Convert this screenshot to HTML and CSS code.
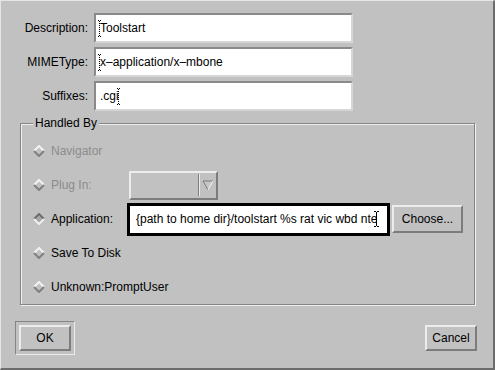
FILE: index.html
```html
<!DOCTYPE html>
<html>
<head>
<meta charset="utf-8">
<link rel="stylesheet" href="styles.css">
</head>
<body>
<div class="dialog">
  <div class="fields">
    <label class="flabel">Description:</label>
    <div class="field"><span class="caret"><svg width="3" height="17" viewBox="0 0 3 17"><path d="M1.5 1V16" stroke="#000" stroke-width="1" stroke-dasharray="1 1"/><rect x="0" y="0" width="1" height="1"/><rect x="2" y="0" width="1" height="1"/><rect x="0" y="16" width="1" height="1"/><rect x="2" y="16" width="1" height="1"/></svg></span>Toolstart</div>
    <label class="flabel">MIMEType:</label>
    <div class="field"><span class="caret"><svg width="3" height="17" viewBox="0 0 3 17"><path d="M1.5 1V16" stroke="#000" stroke-width="1" stroke-dasharray="1 1"/><rect x="0" y="0" width="1" height="1"/><rect x="2" y="0" width="1" height="1"/><rect x="0" y="16" width="1" height="1"/><rect x="2" y="16" width="1" height="1"/></svg></span>x–application/x–mbone</div>
    <label class="flabel">Suffixes:</label>
    <div class="field">.cgi<span class="caret"><svg width="3" height="17" viewBox="0 0 3 17"><path d="M1.5 1V16" stroke="#000" stroke-width="1" stroke-dasharray="1 1"/><rect x="0" y="0" width="1" height="1"/><rect x="2" y="0" width="1" height="1"/><rect x="0" y="16" width="1" height="1"/><rect x="2" y="16" width="1" height="1"/></svg></span></div>
  </div>

  <div class="group">
    <span class="legend">Handled By</span>
    <div class="row disabled">
      <svg class="diamond" width="12" height="12" viewBox="0 0 12 12"><path d="M1 6L6 1L11 6" fill="none" stroke="#f2f2f2" stroke-width="2"/><path d="M1 6L6 11L11 6" fill="none" stroke="#808080" stroke-width="2"/></svg>
      <span class="rlabel">Navigator</span>
    </div>
    <div class="row disabled">
      <svg class="diamond" width="12" height="12" viewBox="0 0 12 12"><path d="M1 6L6 1L11 6" fill="none" stroke="#f2f2f2" stroke-width="2"/><path d="M1 6L6 11L11 6" fill="none" stroke="#808080" stroke-width="2"/></svg>
      <span class="rlabel fixed">Plug In:</span>
      <div class="combo">
        <span class="combo-value"></span>
        <span class="combo-sep"></span>
        <span class="combo-arrow"><svg width="12" height="11" viewBox="0 0 12 11"><path d="M1 1H11L6 10Z" fill="#c6c6c6"/><path d="M6 10L1 1H11" fill="none" stroke="#7a7a7a" stroke-width="1"/><path d="M11 1L6 10" fill="none" stroke="#f2f2f2" stroke-width="1"/></svg></span>
      </div>
    </div>
    <div class="row">
      <svg class="diamond" width="12" height="12" viewBox="0 0 12 12"><path d="M6 1L11 6L6 11L1 6Z" fill="#a8a8a8"/><path d="M1 6L6 1L11 6" fill="none" stroke="#6e6e6e" stroke-width="2"/><path d="M1 6L6 11L11 6" fill="none" stroke="#efefef" stroke-width="2"/></svg>
      <span class="rlabel fixed">Application:</span>
      <div class="appfield">{path to home dir}/toolstart %s rat vic wbd nte<span class="icaret"><svg width="5" height="16" viewBox="0 0 5 16"><path d="M0 0.5H2M3 0.5H5M2.5 1V15M0 15.5H2M3 15.5H5" stroke="#000" stroke-width="1" fill="none"/></svg></span></div>
      <button class="btn choose">Choose...</button>
    </div>
    <div class="row">
      <svg class="diamond" width="12" height="12" viewBox="0 0 12 12"><path d="M1 6L6 1L11 6" fill="none" stroke="#f2f2f2" stroke-width="2"/><path d="M1 6L6 11L11 6" fill="none" stroke="#808080" stroke-width="2"/></svg>
      <span class="rlabel">Save To Disk</span>
    </div>
    <div class="row">
      <svg class="diamond" width="12" height="12" viewBox="0 0 12 12"><path d="M1 6L6 1L11 6" fill="none" stroke="#f2f2f2" stroke-width="2"/><path d="M1 6L6 11L11 6" fill="none" stroke="#808080" stroke-width="2"/></svg>
      <span class="rlabel">Unknown:PromptUser</span>
    </div>
  </div>

  <div class="actions">
    <div class="default-frame"><button class="btn ok">OK</button></div>
    <button class="btn cancel">Cancel</button>
  </div>
</div>
</body>
</html>
```

FILE: styles.css
```css
* { box-sizing: border-box; }
html, body { margin: 0; padding: 0; }
body {
  width: 495px;
  height: 370px;
  background: #c1c1c1;
  font-family: "Liberation Sans", Arial, sans-serif;
  font-size: 12px;
  color: #000;
}
.dialog {
  width: 495px;
  height: 370px;
  background: #c1c1c1;
  border-top: 1px solid #e6e6e6;
  border-left: 1px solid #e6e6e6;
  border-right: 2px solid #6c6c6c;
  border-bottom: 2px solid #6c6c6c;
  padding-top: 12px;
  display: flex;
  flex-direction: column;
}
.fields {
  display: grid;
  grid-template-columns: 87px 259px;
  column-gap: 6px;
  row-gap: 4px;
  align-items: center;
}
.flabel { text-align: right; }
.field {
  height: 30px;
  border: 2px solid;
  border-color: #8a8a8a #d6d6d6 #d6d6d6 #8a8a8a;
  background: #fff;
  padding-left: 4px;
  display: flex;
  align-items: center;
  white-space: pre;
}
.caret {
  display: inline-block;
  width: 0;
  height: 17px;
}
.caret svg { display: block; margin-left: -2px; }

.group {
  position: relative;
  margin: 12px 0 0 19px;
  width: 455px;
  height: 182px;
  border: 1px solid #858585;
  box-shadow: 1px 1px 0 #f0f0f0, inset 1px 1px 0 #f0f0f0;
  padding-top: 10px;
}
.legend {
  position: absolute;
  top: -8px;
  left: 12px;
  padding: 0 2px;
  line-height: 14px;
  background: #c1c1c1;
}
.row {
  height: 34px;
  display: flex;
  align-items: center;
  padding-left: 12px;
}
.diamond { display: block; flex: none; margin-right: 6px; }
.rlabel { white-space: pre; }
.rlabel.fixed { width: 76px; flex: none; }
.disabled .rlabel { color: #8c8c8c; }

.combo {
  margin-left: 2px;
  width: 89px;
  height: 29px;
  border: 2px solid;
  border-color: #ececec #7c7c7c #7c7c7c #ececec;
  display: flex;
  align-items: center;
}
.combo-value { flex: 1; }
.combo-sep {
  width: 2px;
  height: 22px;
  border-left: 1px solid #7c7c7c;
  border-right: 1px solid #ececec;
}
.combo-arrow {
  width: 16px;
  display: flex;
  justify-content: center;
}
.combo-arrow svg { display: block; }

.appfield {
  width: 263px;
  height: 33px;
  border: 3px solid #000;
  background: #fff;
  padding-left: 6px;
  display: flex;
  align-items: center;
  white-space: pre;
  flex: none;
}
.icaret { display: inline-block; width: 0; height: 16px; }
.icaret svg { display: block; margin-left: -3px; }

.btn {
  font: inherit;
  color: #000;
  background: #c1c1c1;
  border: 2px solid;
  border-color: #ececec #7c7c7c #7c7c7c #ececec;
  padding: 0;
  display: flex;
  align-items: center;
  justify-content: center;
}
.choose { margin-left: 2px; width: 71px; height: 28px; flex: none; }

.actions {
  display: flex;
  justify-content: space-between;
  align-items: center;
  margin-top: 16px;
  padding: 0 16px 0 14px;
}
.default-frame {
  border: 1px solid;
  border-color: #858585 #ececec #ececec #858585;
  padding: 3px;
}
.ok { width: 52px; height: 26px; }
.cancel { width: 52px; height: 26px; }
```
